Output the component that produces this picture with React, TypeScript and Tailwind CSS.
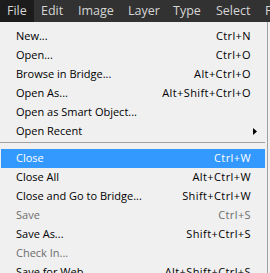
type Item = { label: string; shortcut?: string; disabled?: boolean; active?: boolean; submenu?: boolean } | 'sep'

const MENUS: [string, string][] = [
  ['File', 'w-[34px]'],
  ['Edit', 'w-[37px]'],
  ['Image', 'w-[50px]'],
  ['Layer', 'w-[45px]'],
  ['Type', 'w-[43px]'],
  ['Select', 'w-[49px]'],
  ['Filter', 'w-[40px]'],
]

const ITEMS: Item[] = [
  { label: 'New...', shortcut: 'Ctrl+N' },
  { label: 'Open...', shortcut: 'Ctrl+O' },
  { label: 'Browse in Bridge...', shortcut: 'Alt+Ctrl+O' },
  { label: 'Open As...', shortcut: 'Alt+Shift+Ctrl+O' },
  { label: 'Open as Smart Object...' },
  { label: 'Open Recent', submenu: true },
  'sep',
  { label: 'Close', shortcut: 'Ctrl+W', active: true },
  { label: 'Close All', shortcut: 'Alt+Ctrl+W' },
  { label: 'Close and Go to Bridge...', shortcut: 'Shift+Ctrl+W' },
  { label: 'Save', shortcut: 'Ctrl+S', disabled: true },
  { label: 'Save As...', shortcut: 'Shift+Ctrl+S' },
  { label: 'Check In...', disabled: true },
  { label: 'Save for Web...', shortcut: 'Alt+Shift+Ctrl+S' },
]

export default function App() {
  return (
    <div className="w-[270px] h-[273px] overflow-hidden bg-[#f0f0f0] font-['Open_Sans','Noto_Sans',sans-serif]">
      <div className="flex h-[22px] bg-[#323232] text-[12.5px] text-[#d6d6d6]">
        {MENUS.map(([m, w], i) => (
          <div
            key={m}
            className={
              'flex shrink-0 items-center pl-[7px] ' + w + (i === 0 ? ' bg-[#1c1c1c]' : '')
            }
          >
            {m}
          </div>
        ))}
      </div>
      <div className="w-[268px] border-r border-[#a0a0a0] pt-[5px] text-[11px] text-black">
        {ITEMS.map((it, i) =>
          it === 'sep' ? (
            <div key={i} className="h-[8px] pt-[1px] pr-[2px]">
              <div className="h-px bg-[#a0a0a0]" />
            </div>
          ) : (
            <div
              key={i}
              className={
                'flex h-[19px] items-center justify-between pl-[15px] pr-[14px] ml-px mr-[2px] ' +
                (it.active ? 'bg-[#3399ff] text-white ' : '') +
                (it.disabled ? 'text-[#6d6d6d]' : '')
              }
            >
              <span className="whitespace-nowrap">{it.label}</span>
              {it.shortcut && (
                <span className="whitespace-nowrap tracking-[0.4px]">{it.shortcut}</span>
              )}
              {it.submenu && (
                <svg width="4" height="7" viewBox="0 0 4 7" className="-mr-[6px]">
                  <path d="M0 0 L4 3.5 L0 7 Z" fill="#000" />
                </svg>
              )}
            </div>
          )
        )}
      </div>
    </div>
  )
}
